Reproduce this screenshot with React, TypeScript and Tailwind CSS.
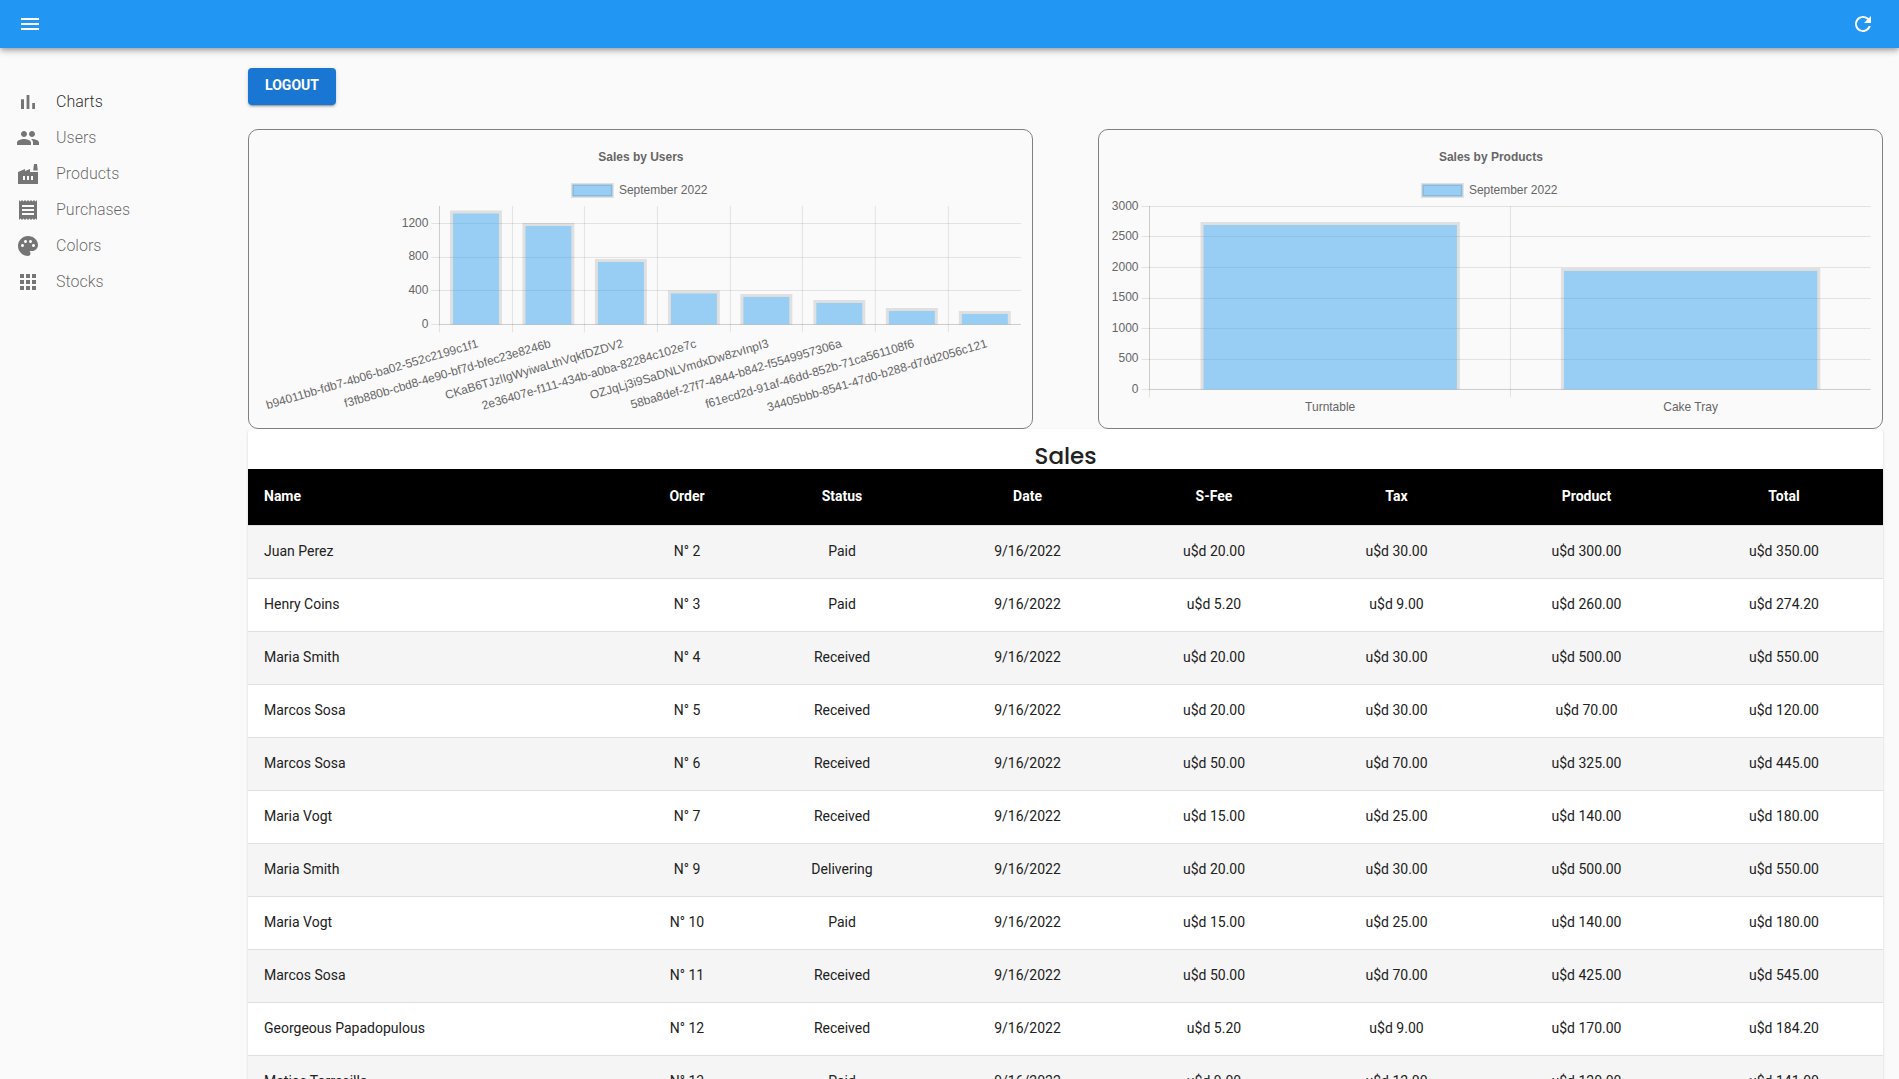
const SHADOW_BAR =
  "shadow-[0px_2px_4px_-1px_rgba(0,0,0,0.2),0px_4px_5px_0px_rgba(0,0,0,0.14),0px_1px_10px_0px_rgba(0,0,0,0.12)]";
const SHADOW_BUTTON =
  "shadow-[0px_3px_1px_-2px_rgba(0,0,0,0.2),0px_2px_2px_0px_rgba(0,0,0,0.14),0px_1px_5px_0px_rgba(0,0,0,0.12)]";
const SHADOW_PAPER =
  "shadow-[0px_2px_1px_-1px_rgba(0,0,0,0.2),0px_1px_1px_0px_rgba(0,0,0,0.14),0px_1px_3px_0px_rgba(0,0,0,0.12)]";

const ICONS = {
  menu: "M3 18h18v-2H3v2zm0-5h18v-2H3v2zm0-7v2h18V6H3z",
  refresh:
    "M17.65 6.35C16.2 4.9 14.21 4 12 4c-4.42 0-7.99 3.58-7.99 8s3.57 8 7.99 8c3.73 0 6.84-2.55 7.73-6h-2.08c-.82 2.33-3.04 4-5.65 4-3.31 0-6-2.69-6-6s2.69-6 6-6c1.66 0 3.14.69 4.22 1.78L13 11h7V4l-2.35 2.35z",
  charts: "M5 9.2h3V19H5zM10.6 5h2.8v14h-2.8zm5.6 8H19v6h-2.8z",
  users:
    "M16 11c1.66 0 2.99-1.34 2.99-3S17.66 5 16 5c-1.66 0-3 1.34-3 3s1.34 3 3 3zm-8 0c1.66 0 2.99-1.34 2.99-3S9.66 5 8 5C6.34 5 5 6.34 5 8s1.34 3 3 3zm0 2c-2.33 0-7 1.17-7 3.5V19h14v-2.5c0-2.33-4.67-3.5-7-3.5zm8 0c-.29 0-.62.02-.97.05 1.16.84 1.97 1.97 1.97 3.45V19h6v-2.5c0-2.33-4.67-3.5-7-3.5z",
  products:
    "M22 10v12H2V10l7-3v2l5-2v3h8zm-4.8-1.5L18 2h3l.8 6.5h-4.6zM11 18h2v-4h-2v4zm-4 0h2v-4H7v4zm10-4h-2v4h2v-4z",
  purchases:
    "M18 17H6v-2h12v2zm0-4H6v-2h12v2zm0-4H6V7h12v2zM3 22l1.5-1.5L6 22l1.5-1.5L9 22l1.5-1.5L12 22l1.5-1.5L15 22l1.5-1.5L18 22l1.5-1.5L21 22V2l-1.5 1.5L18 2l-1.5 1.5L15 2l-1.5 1.5L12 2l-1.5 1.5L9 2 7.5 3.5 6 2 4.5 3.5 3 2v20z",
  colors:
    "M12 2C6.49 2 2 6.49 2 12s4.49 10 10 10c1.38 0 2.5-1.12 2.5-2.5 0-.61-.23-1.2-.64-1.67-.08-.1-.13-.21-.13-.33 0-.28.22-.5.5-.5H16c3.31 0 6-2.69 6-6 0-4.96-4.49-9-10-9zm5.5 11c-.83 0-1.5-.67-1.5-1.5s.67-1.5 1.5-1.5 1.5.67 1.5 1.5-.67 1.5-1.5 1.5zm-3-4c-.83 0-1.5-.67-1.5-1.5S13.67 6 14.5 6s1.5.67 1.5 1.5S15.33 9 14.5 9zM5 11.5c0-.83.67-1.5 1.5-1.5s1.5.67 1.5 1.5S7.33 13 6.5 13 5 12.33 5 11.5zm6-4c0 .83-.67 1.5-1.5 1.5S8 8.33 8 7.5 8.67 6 9.5 6s1.5.67 1.5 1.5z",
  stocks:
    "M4 8h4V4H4v4zm6 12h4v-4h-4v4zm-6 0h4v-4H4v4zm0-6h4v-4H4v4zm6 0h4v-4h-4v4zm6-10v4h4V4h-4zm-6 4h4V4h-4v4zm6 6h4v-4h-4v4zm0 6h4v-4h-4v4z",
};

function Icon({ name, className = "" }: { name: keyof typeof ICONS; className?: string }) {
  return (
    <svg viewBox="0 0 24 24" className={`size-6 fill-current ${className}`} aria-hidden="true">
      <path d={ICONS[name]} />
    </svg>
  );
}

const NAV: { label: string; icon: keyof typeof ICONS; active?: boolean }[] = [
  { label: "Charts", icon: "charts", active: true },
  { label: "Users", icon: "users" },
  { label: "Products", icon: "products" },
  { label: "Purchases", icon: "purchases" },
  { label: "Colors", icon: "colors" },
  { label: "Stocks", icon: "stocks" },
];

type ChartProps = {
  title: string;
  left: number;
  bottom: number;
  gridX: number[];
  ticks: { label: string; y: number }[];
  bars: { label: string; x: number; top: number }[];
  barWidth: number;
  slanted?: boolean;
};

const RIGHT = 772;
const TOP = 76;

function BarChart({ title, left, bottom, gridX, ticks, bars, barWidth, slanted }: ChartProps) {
  const tickStep = (bottom - ticks[ticks.length - 1].y) / (ticks.length - 1);
  return (
    <svg
      viewBox="0 0 783 298"
      role="img"
      aria-label={title}
      className="block w-full font-['Liberation_Sans',Arial,sans-serif] text-[12px]"
    >
      <g stroke="rgba(0,0,0,0.1)">
        {gridX.map((x) => (
          <path key={x} d={`M${x} ${TOP}V${bottom + 8}`} />
        ))}
        {ticks.map((t) => (
          <path key={t.y} d={`M${left - 8} ${t.y}H${RIGHT}`} />
        ))}
        <path d={`M${left} ${TOP}V${bottom}`} />
        <path d={`M${left} ${bottom}H${RIGHT}`} />
      </g>
      {bars.map((b) => (
        <g key={b.label}>
          <rect
            x={b.x + 3}
            y={b.top + 3}
            width={barWidth - 6}
            height={bottom - b.top - 3}
            fill="rgba(54,162,235,0.5)"
          />
          <path
            d={`M${b.x} ${bottom}V${b.top}h${barWidth}V${bottom}h-3V${b.top + 3}h${6 - barWidth}V${bottom}z`}
            fill="rgba(0,0,0,0.1)"
          />
        </g>
      ))}
      <rect
        x="323.5"
        y="54.5"
        width="40"
        height="12"
        fill="rgba(54,162,235,0.5)"
        stroke="rgba(0,0,0,0.1)"
        strokeWidth="3"
      />
      <g fill="#666">
        <text x="392" y="31" textAnchor="middle" fontWeight="bold">
          {title}
        </text>
        <text x="370" y="64">
          September 2022
        </text>
        {ticks.map((t, i) => (
          <text
            key={t.label}
            x={left - 11}
            y={Math.floor(bottom - i * tickStep + 3.5)}
            textAnchor="end"
          >
            {t.label}
          </text>
        ))}
        {bars.map((b) =>
          slanted ? (
            <text
              key={b.label}
              textAnchor="end"
              transform={`translate(${b.x + barWidth / 2 + 3} 217) rotate(-16.4)`}
            >
              {b.label}
            </text>
          ) : (
            <text key={b.label} x={b.x + barWidth / 2} y={bottom + 22} textAnchor="middle">
              {b.label}
            </text>
          ),
        )}
      </g>
    </svg>
  );
}

const USERS_CHART: ChartProps = {
  title: "Sales by Users",
  left: 190.5,
  bottom: 194.5,
  gridX: [190.5, 263.5, 335.5, 408.5, 481.5, 553.5, 626.5, 699.5],
  ticks: [
    { label: "0", y: 194.5 },
    { label: "400", y: 160.5 },
    { label: "800", y: 127.5 },
    { label: "1200", y: 93.5 },
  ],
  barWidth: 52,
  bars: [
    { label: "b94011bb-fdb7-4b06-ba02-552c2199c1f1", x: 201, top: 80.5 },
    { label: "f3fb880b-cbd8-4e90-bf7d-bfec23e8246b", x: 273.5, top: 93 },
    { label: "CKaB6TJzlIgWyiwaLthVqkfDZDV2", x: 346, top: 129 },
    { label: "2e36407e-f111-434b-a0ba-82284c102e7c", x: 419, top: 160.5 },
    { label: "OZJqLj3i9SaDNLVmdxDw8zvInpI3", x: 491.5, top: 164 },
    { label: "58ba8def-27f7-4844-b842-f5549957306a", x: 564.5, top: 170 },
    { label: "f61ecd2d-91af-46dd-852b-71ca561108f6", x: 637, top: 178 },
    { label: "34405bbb-8541-47d0-b288-d7dd2056c121", x: 710, top: 181 },
  ],
  slanted: true,
};

const PRODUCTS_CHART: ChartProps = {
  title: "Sales by Products",
  left: 50.5,
  bottom: 259.5,
  gridX: [50.5, 411.5],
  ticks: [
    { label: "0", y: 259.5 },
    { label: "500", y: 229.5 },
    { label: "1000", y: 198.5 },
    { label: "1500", y: 168.5 },
    { label: "2000", y: 137.5 },
    { label: "2500", y: 106.5 },
    { label: "3000", y: 76.5 },
  ],
  barWidth: 259.5,
  bars: [
    { label: "Turntable", x: 101.5, top: 92 },
    { label: "Cake Tray", x: 462, top: 138 },
  ],
};

const COLUMNS = [
  { label: "Name", width: "w-[374px]" },
  { label: "Order", width: "w-[130px]" },
  { label: "Status", width: "w-[180px]" },
  { label: "Date", width: "w-[191px]" },
  { label: "S-Fee", width: "w-[182px]" },
  { label: "Tax", width: "w-[183px]" },
  { label: "Product", width: "w-[197px]" },
  { label: "Total", width: "w-[198px]" },
];

const SALES = [
  ["Juan Perez", 2, "Paid", "20.00", "30.00", "300.00", "350.00"],
  ["Henry Coins", 3, "Paid", "5.20", "9.00", "260.00", "274.20"],
  ["Maria Smith", 4, "Received", "20.00", "30.00", "500.00", "550.00"],
  ["Marcos Sosa", 5, "Received", "20.00", "30.00", "70.00", "120.00"],
  ["Marcos Sosa", 6, "Received", "50.00", "70.00", "325.00", "445.00"],
  ["Maria Vogt", 7, "Received", "15.00", "25.00", "140.00", "180.00"],
  ["Maria Smith", 9, "Delivering", "20.00", "30.00", "500.00", "550.00"],
  ["Maria Vogt", 10, "Paid", "15.00", "25.00", "140.00", "180.00"],
  ["Marcos Sosa", 11, "Received", "50.00", "70.00", "425.00", "545.00"],
  ["Georgeous Papadopulous", 12, "Received", "5.20", "9.00", "170.00", "184.20"],
  ["Matias Torrecilla", 13, "Paid", "9.00", "12.00", "120.00", "141.00"],
] as const;

const CELL = "border-b border-[#e0e0e0] pb-0.5";

function SalesTable() {
  return (
    <section className={`rounded bg-white ${SHADOW_PAPER}`}>
      <h2 className="pt-3.5 text-center font-['Poppins','Inter',sans-serif] text-[23px] leading-[26px] font-medium">
        Sales
      </h2>
      <table className="w-full table-fixed border-separate border-spacing-0 text-sm">
        <colgroup>
          {COLUMNS.map((c) => (
            <col key={c.label} className={c.width} />
          ))}
        </colgroup>
        <thead>
          <tr className="h-[57px] bg-black text-white">
            {COLUMNS.map((c) => (
              <th
                key={c.label}
                scope="col"
                className={`px-4 text-center font-bold first:text-left ${CELL}`}
              >
                {c.label}
              </th>
            ))}
          </tr>
        </thead>
        <tbody>
          {SALES.map(([name, order, status, ...amounts]) => (
            <tr key={order} className="h-[53px] text-center odd:bg-[#f5f5f5]">
              <td className={`px-4 text-left ${CELL}`}>{name}</td>
              <td className={CELL}>N° {order}</td>
              <td className={CELL}>{status}</td>
              <td className={CELL}>9/16/2022</td>
              {amounts.map((a, i) => (
                <td key={i} className={CELL}>
                  u$d {a}
                </td>
              ))}
            </tr>
          ))}
        </tbody>
      </table>
    </section>
  );
}

export default function App() {
  return (
    <div className="flex h-screen flex-col overflow-hidden bg-[#fafafa] font-['Roboto',sans-serif] text-[#212121]">
      <header
        className={`z-10 flex h-12 shrink-0 items-center justify-between bg-[#2196f3] pr-6 pl-[18px] text-white ${SHADOW_BAR}`}
      >
        <button aria-label="Open menu">
          <Icon name="menu" />
        </button>
        <button aria-label="Refresh">
          <Icon name="refresh" />
        </button>
      </header>
      <div className="flex min-h-0 grow">
        <nav className="w-60 shrink-0 pt-9">
          {NAV.map((item) => (
            <a
              key={item.label}
              href={`#${item.label.toLowerCase()}`}
              className={`flex h-9 items-center gap-4 px-4 text-base font-light ${
                item.active ? "text-black/85" : "text-black/60"
              }`}
            >
              <Icon name={item.icon} className="text-[#757575]" />
              {item.label}
            </a>
          ))}
        </nav>
        <main className="min-w-0 grow pt-5 pr-4 pl-2">
          <button
            className={`flex h-[37px] w-[88px] justify-center rounded bg-[#1976d2] pt-[5px] text-sm leading-6 font-bold text-white uppercase ${SHADOW_BUTTON}`}
          >
            Logout
          </button>
          <div className="mt-6 flex justify-between">
            <div className="w-[48%] rounded-[10px] border border-[#808080]">
              <BarChart {...USERS_CHART} />
            </div>
            <div className="w-[48%] rounded-[10px] border border-[#808080]">
              <BarChart {...PRODUCTS_CHART} />
            </div>
          </div>
          <SalesTable />
        </main>
      </div>
    </div>
  );
}
